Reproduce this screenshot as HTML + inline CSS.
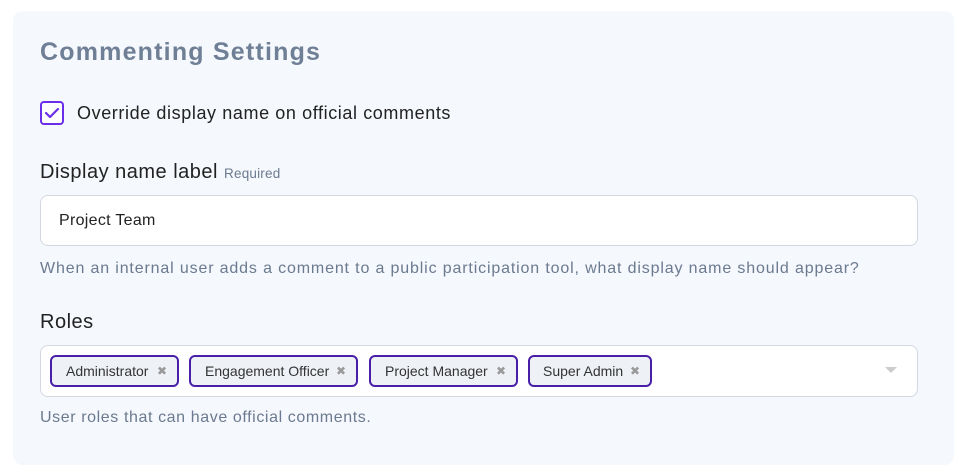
<!DOCTYPE html>
<html><head><style>
body{margin:0;background:#fff;font-family:"Liberation Sans",sans-serif;width:970px;height:476px;position:relative;overflow:hidden}
.p{position:absolute;left:13px;top:11px;width:941px;height:454px;background:#f5f8fc;border-radius:10px}
.a{position:absolute;white-space:nowrap}
.t{left:40px;top:38px;font-size:25px;font-weight:bold;color:#6f7f95;letter-spacing:1.2px}
.cb{left:40px;top:101px;width:20px;height:20px;border:2px solid #6a2ee8;border-radius:4px;background:#fff}
.in{left:40px;top:195px;width:876px;height:49px;border:1.5px solid #d3d8e0;border-radius:8px;background:#fff}
.tags{left:40px;top:345px;width:876px;height:50px;border:1.5px solid #d3d8e0;border-radius:8px;background:#fff}
.tag{position:absolute;top:355px;height:28px;border:2px solid #4a1fa8;border-radius:6px;background:#eef1f6;font-size:14px;color:#333;line-height:28px;box-sizing:content-box}
.tag span{position:absolute;right:10px;color:#999;font-size:12px}
.h{font-size:16px;color:#6b7a90;letter-spacing:0.75px}
</style></head><body>
<div class="p"></div>
<div class="a t">Commenting Settings</div>
<div class="a cb"><svg width="20" height="20" viewBox="0 0 20 20"><path d="M4 10l4 4 8-8" fill="none" stroke="#6a2ee8" stroke-width="2.2" stroke-linecap="round" stroke-linejoin="round"/></svg></div>
<div class="a" style="left:77px;top:103px;font-size:18px;color:#222;letter-spacing:0.6px">Override display name on official comments</div>
<div class="a" style="left:40px;top:161px;font-size:20px;color:#222;letter-spacing:0.5px">Display name label <span style="font-size:13.5px;color:#6b7a90;letter-spacing:0.2px">Required</span></div>
<div class="a in"></div>
<div class="a" style="left:59px;top:212px;font-size:16px;color:#222;letter-spacing:0.3px">Project Team</div>
<div class="a h" style="left:40px;top:260px;letter-spacing:0.85px">When an internal user adds a comment to a public participation tool, what display name should appear?</div>
<div class="a" style="left:40px;top:311px;font-size:20px;color:#222;letter-spacing:0.5px">Roles</div>
<div class="a tags"></div>
<div class="tag" style="left:50px;width:125px"><span style="left:14px;right:auto;color:#333;font-size:14px">Administrator</span><span>✖</span></div>
<div class="tag" style="left:189px;width:165px"><span style="left:14px;right:auto;color:#333;font-size:14px">Engagement Officer</span><span>✖</span></div>
<div class="tag" style="left:369px;width:145px"><span style="left:14px;right:auto;color:#333;font-size:14px">Project Manager</span><span>✖</span></div>
<div class="tag" style="left:528px;width:120px"><span style="left:13px;right:auto;color:#333;font-size:14px">Super Admin</span><span>✖</span></div>
<div class="a" style="left:885px;top:367px;width:0;height:0;border-left:6px solid transparent;border-right:6px solid transparent;border-top:6px solid #ccc"></div>
<div class="a h" style="left:40px;top:409px;letter-spacing:0.6px">User roles that can have official comments.</div>
</body></html>
